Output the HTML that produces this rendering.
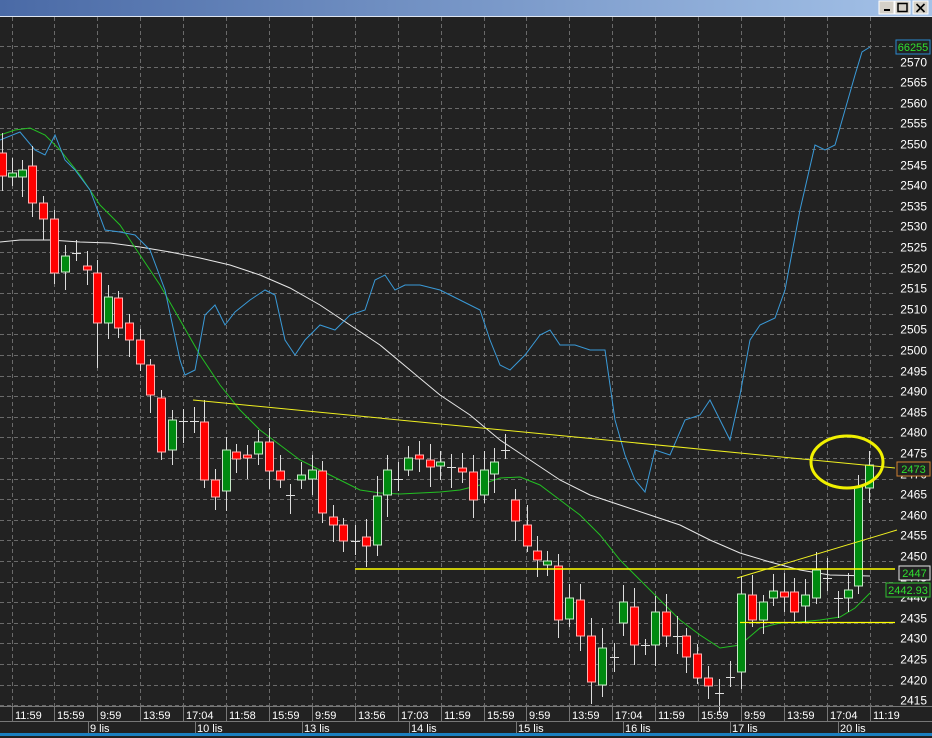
<!DOCTYPE html>
<html><head><meta charset="utf-8"><style>
html,body{margin:0;padding:0;background:#222;width:932px;height:738px;overflow:hidden}
svg{display:block;font-family:"Liberation Sans",sans-serif}
</style></head><body>
<svg id="s" width="932" height="738" xmlns="http://www.w3.org/2000/svg">
<defs><linearGradient id="tb" x1="0" x2="1"><stop offset="0" stop-color="#4a6aa6"/><stop offset="1" stop-color="#a4c2e8"/></linearGradient></defs>
<rect x="0" y="0" width="932" height="738" fill="#222"/>
<rect x="0" y="0" width="932" height="16" fill="url(#tb)"/>
<line x1="0" y1="16.5" x2="932" y2="16.5" stroke="#dfe6f2"/>
<g id="btns">
<rect x="879" y="1" width="15" height="13" fill="#d4d0c8" stroke="#fff"/><rect x="884" y="9" width="6" height="2" fill="#000"/>
<rect x="895" y="1" width="15" height="13" fill="#d4d0c8" stroke="#fff"/><rect x="898" y="3.5" width="9" height="8" fill="none" stroke="#000" stroke-width="1.5"/>
<rect x="913" y="1" width="15" height="13" fill="#d4d0c8" stroke="#fff"/><path d="M916.5 4l8 8M924.5 4l-8 8" stroke="#000" stroke-width="1.6"/>
</g>
<g id="grid" stroke="#6a6a6a" stroke-dasharray="4,3" stroke-width="1"></g>
<g id="lines" fill="none"></g>
<g id="candles"></g>
<g id="over" fill="none"></g>
<g id="axis" fill="#fff" font-size="11"></g>
<rect x="0" y="706" width="932" height="1" fill="#777"/>
<rect x="0" y="721" width="932" height="1" fill="#777"/>
<rect x="0" y="733" width="932" height="3" fill="#1a7fc0"/>
</svg>
<script>
var NS="http://www.w3.org/2000/svg";
function el(p,t,a,txt){var e=document.createElementNS(NS,t);for(var k in a)e.setAttribute(k,a[k]);if(txt)e.textContent=txt;document.getElementById(p).appendChild(e);return e;}
var vx=[12,54,97,140,183,226,269,312,355,398,441,484,526,569,612,655,698,741,784,827,870];
vx.forEach(function(x){el("grid","line",{x1:x+.5,y1:17,x2:x+.5,y2:706});});
function py(p){return 46+(2575-p)*4.12;}
for(var p=2575;p>=2415;p-=5){var y=Math.round(py(p))+.5;el("grid","line",{x1:0,y1:y,x2:895,y2:y});if(p<=2570)el("axis","text",{x:927,y:y-1,"text-anchor":"end","font-size":"12"},""+p);}
function pl(pts,c,w){el("lines","polyline",{points:pts,stroke:c,"stroke-width":w||1});}
pl("0,242 20,240 50,240 80,242 110,243 140,247 170,252 200,258 230,265 260,275 290,288 320,305 350,325 380,345 410,370 440,395 470,415 500,440 530,460 560,480 590,495 620,505 650,515 680,525 710,540 740,553 770,562 800,570 830,575 870,576","#e8e8e8");
pl("0,135 15,130 30,128 45,135 60,150 80,175 100,205 120,225 140,255 160,285 180,320 200,355 220,385 240,410 260,430 280,445 300,460 320,470 340,480 360,490 380,493 400,494 420,493 440,492 460,490 480,485 500,478 520,477 540,485 560,500 580,515 600,535 620,560 640,580 660,600 680,620 700,635 720,648 740,645 760,628 780,623 800,622 820,620 840,617 855,608 870,593","#22c022");
pl("0,140 20,132 35,150 45,155 55,135 65,160 75,170 90,190 105,230 120,232 135,235 150,250 165,290 180,360 185,375 195,370 205,315 215,305 225,325 235,312 250,300 265,290 275,295 285,340 295,355 305,340 320,325 335,330 350,315 365,310 375,280 385,275 395,290 405,285 420,285 440,290 460,300 480,310 490,340 500,365 510,370 525,355 540,335 550,330 560,345 575,345 590,350 605,350 615,420 625,455 635,480 645,492 655,450 670,455 685,420 700,415 710,400 720,420 730,440 740,395 750,340 760,325 775,318 785,290 800,210 815,145 825,150 835,145 845,110 855,75 862,52 870,47","#3a9ad8");
var C=[[2,153,176,'r'],[12,173,177,'g'],[22,170,177,'g'],[32,166,203,'r'],[43,203,219,'r'],[54,219,273,'r'],[65,256,272,'g'],[76,253,253,'h'],[87,266,270,'r'],[97,273,323,'r',260,368],[108,297,323,'g'],[118,298,328,'r'],[129,323,340,'r'],[140,340,364,'r'],[150,365,395,'r'],[161,398,452,'r'],[172,420,450,'g'],[183,421,421,'h'],[194,421,421,'h'],[204,422,480,'r',400,488],[215,480,497,'r'],[226,450,491,'g'],[236,452,459,'r'],[247,455,458,'r'],[258,442,454,'g'],[269,442,471,'r'],[280,471,480,'r'],[290,495,495,'h'],[301,475,480,'g'],[312,470,479,'g'],[322,471,513,'r'],[333,517,525,'r'],[343,525,541,'r'],[355,541,541,'h'],[366,537,546,'r'],[377,496,545,'g'],[387,470,495,'g'],[398,479,479,'h'],[408,458,470,'g'],[419,455,459,'r'],[430,460,467,'r'],[440,462,466,'g'],[451,467,467,'h'],[462,468,472,'r'],[473,472,500,'r'],[484,470,495,'g'],[494,462,474,'g'],[505,450,450,'h'],[515,500,521,'r'],[527,525,546,'r'],[537,551,560,'r'],[547,561,565,'g'],[558,566,620,'r'],[569,598,619,'g'],[580,600,636,'r'],[591,636,682,'r'],[602,648,685,'g'],[614,657,657,'h'],[623,602,623,'g'],[634,607,645,'r'],[645,645,645,'h'],[655,612,645,'g'],[666,612,636,'r'],[677,636,636,'h'],[686,636,657,'r'],[697,654,678,'r'],[708,678,686,'r'],[719,693,693,'h'],[730,677,677,'h'],[741,594,672,'g'],[752,595,620,'r'],[763,602,620,'g'],[773,591,598,'g'],[784,592,597,'r'],[794,592,612,'r'],[805,595,606,'g'],[816,570,598,'g'],[827,578,578,'h'],[838,598,598,'h'],[848,590,598,'g'],[858,487,586,'g'],[869,465,488,'g']];
C.forEach(function(c){var x=c[0],t=c[1],b=c[2],hi=c[4]||t-(6+((x*7)%15)),lo=c[5]||b+(6+((x*13)%17));
el("candles","line",{x1:x+.5,y1:hi,x2:x+.5,y2:lo,stroke:"#ddd"});
if(c[3]=='h'){el("candles","line",{x1:x-4,y1:t+.5,x2:x+5,y2:t+.5,stroke:"#ddd"});return;}
el("candles","rect",{x:x-3.5,y:t,width:8,height:Math.max(b-t,3),fill:c[3]=='r'?"#ff0000":"#008a10",stroke:c[3]=='r'?"#ffb0b0":"#c8e8c8","stroke-width":1});});
function ol(a,c,w){el("over","line",{x1:a[0],y1:a[1],x2:a[2],y2:a[3],stroke:c||"#f0f020","stroke-width":w||1});}
ol([193,400,895,468]);ol([355,569,895,569],"#ffff00",1.5);ol([740,622.5,895,622.5],"#ffff00",1.2);ol([737,578,897,530]);
el("over","ellipse",{cx:847,cy:462,rx:36,ry:26,stroke:"#f0f000","stroke-width":3});
function box(x,y,w,txt,bc,tc){el("axis","rect",{x:x,y:y,width:w,height:14,fill:"#222",stroke:bc});el("axis","text",{x:x+w/2,y:y+11,"text-anchor":"middle",fill:tc},txt);}
box(896,40,34,"66255","#2a8ad0","#30e030");
box(897,462,33,"2473","#d08030","#30e030");
box(899,566,31,"2447","#e8e8e8","#30e030");
box(886,583,44,"2442.93","#30c030","#30e030");
var tl=["11:59","15:59","9:59","13:59","17:04","11:58","15:59","9:59","13:56","17:03","11:59","15:59","9:59","13:59","17:04","11:59","15:59","9:59","13:59","17:04","11:19"];
vx.forEach(function(x,i){el("axis","line",{x1:x+.5,y1:707,x2:x+.5,y2:721,stroke:"#777"});el("axis","text",{x:x+3,y:719},tl[i]);});
var dx=[88,195,302,409,516,623,730,838],dl=["9 lis","10 lis","13 lis","14 lis","15 lis","16 lis","17 lis","20 lis"];
dx.forEach(function(x,i){el("axis","line",{x1:x+.5,y1:722,x2:x+.5,y2:733,stroke:"#777"});el("axis","text",{x:x+2,y:732},dl[i]);});
</script>
</body></html>
